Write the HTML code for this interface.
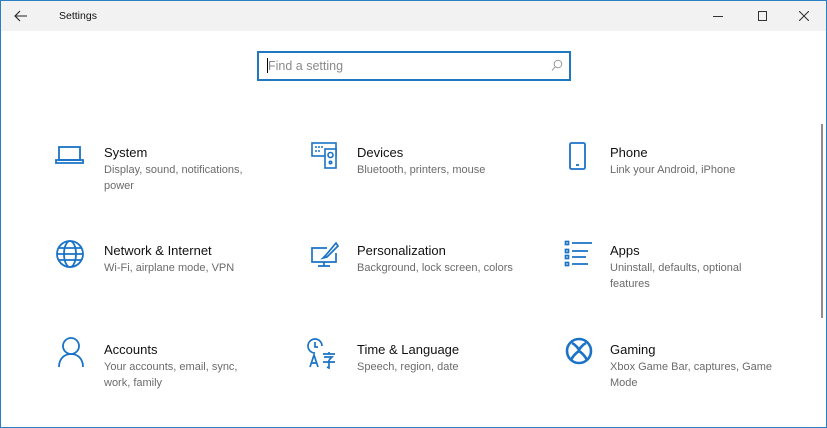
<!DOCTYPE html>
<html><head><style>
*{margin:0;padding:0;box-sizing:border-box}
body{width:827px;height:428px;overflow:hidden;background:#fff;font-family:"Liberation Sans",sans-serif;position:relative}
.frame{position:absolute;left:0;top:0;width:827px;height:428px;border:1px solid #2b7ec1;border-top:1px solid #2b7ec1}
.tb{position:absolute;left:1px;top:1px;width:825px;height:30px;background:#f2f2f2}
.t{position:absolute;font-size:13px;color:#111;white-space:nowrap}
.s{position:absolute;font-size:11px;color:#6b6b6b;line-height:16px}
svg{position:absolute}
</style></head><body>
<div class="tb"></div>
<div class="frame"></div>
<svg style="left:14px;top:10px" width="14" height="12" viewBox="0 0 14 12"><path d="M13 6H1M6 1L1 6l5 5" stroke="#222" stroke-width="1.1" fill="none"/></svg>
<div class="t" style="left:59px;top:10px;font-size:10.5px">Settings</div>
<div style="position:absolute;left:713px;top:16px;width:10px;height:1px;background:#333"></div>
<div style="position:absolute;left:758px;top:11px;width:9px;height:10px;border:1px solid #333"></div>
<svg style="left:799px;top:11px" width="10" height="10"><path d="M0 0L10 10M10 0L0 10" stroke="#333" stroke-width="1.1"/></svg>
<div style="position:absolute;left:257px;top:51px;width:314px;height:30px;border:2px solid #1f78c0;background:#fff"></div>
<div style="position:absolute;left:267px;top:58px;width:1px;height:15px;background:#000"></div>
<div class="t" style="left:268px;top:59px;font-size:12.5px;color:#8a8a8a">Find a setting</div>
<svg style="left:551px;top:59px" width="12" height="13" viewBox="0 0 12 13"><circle cx="7" cy="5" r="3.8" stroke="#999" fill="none"/><path d="M4.3 7.7L1 11.5" stroke="#999"/></svg>
<div style="position:absolute;left:821px;top:124px;width:2px;height:194px;background:#8d8d8d"></div>

<svg style="left:55px;top:144px" width="30" height="22" viewBox="0 0 30 22" fill="none" stroke="#1a73c6" stroke-width="1.8"><rect x="4" y="3" width="21" height="13"/><path d="M1 16h27v3H1z"/></svg>
<svg style="left:310px;top:141px" width="30" height="30" viewBox="0 0 30 30" fill="none" stroke="#1a73c6" stroke-width="1.6"><rect x="2" y="2" width="24" height="13"/><rect x="15" y="8" width="11" height="19" fill="#fff"/><circle cx="20.5" cy="14" r="2.5"/><circle cx="20.5" cy="21.5" r="1.2"/><path d="M5 6h8M5 10h6" stroke-dasharray="2 1"/></svg>
<svg style="left:568px;top:141px" width="20" height="30" viewBox="0 0 20 30" fill="none" stroke="#1a73c6" stroke-width="1.8"><rect x="2" y="2" width="15" height="26" rx="1.5"/><path d="M8 24h3"/></svg>
<svg style="left:55px;top:239px" width="30" height="30" viewBox="0 0 30 30" fill="none" stroke="#1a73c6" stroke-width="1.8"><circle cx="15" cy="15" r="13"/><ellipse cx="15" cy="15" rx="6" ry="13"/><path d="M2 15h26M4 9h22M4 21h22"/></svg>
<svg style="left:310px;top:241px" width="30" height="28" viewBox="0 0 30 28" fill="none" stroke="#1a73c6" stroke-width="1.7"><path d="M17 7H2v14h24V12"/><path d="M14 21v4M8 25h12"/><path d="M26 2l-10 12-3 3 4-1 11-11z"/></svg>
<svg style="left:564px;top:240px" width="30" height="28" viewBox="0 0 30 28" fill="none" stroke="#1a73c6" stroke-width="1.7"><rect x="1.5" y="1.5" width="3" height="3"/><rect x="1.5" y="9.5" width="3" height="3"/><rect x="1.5" y="15.5" width="3" height="3"/><rect x="1.5" y="22.5" width="3" height="3"/><path d="M8 3h20M8 11h16M8 17h14M8 24h16"/></svg>
<svg style="left:57px;top:336px" width="28" height="32" viewBox="0 0 28 32" fill="none" stroke="#1a73c6" stroke-width="1.8"><circle cx="14" cy="10" r="8"/><path d="M2 31c0-8 5-13 12-13s12 5 12 13"/></svg>
<svg style="left:307px;top:337px" width="34" height="32" viewBox="0 0 34 32" fill="none" stroke="#1a73c6" stroke-width="1.7"><path d="M15 9a7 7 0 1 0-7 7"/><path d="M8 5v5h3"/><path d="M3 30l4-12 4 12M4.5 26h5"/><path d="M16 17h12M22 15v2M17 20h8l-3 3M16 25h12M22 23v8l-2-1"/></svg>
<svg style="left:565px;top:337px" width="28" height="28" viewBox="0 0 28 28" fill="none" stroke="#1a73c6" stroke-width="2.6"><circle cx="14" cy="14" r="12"/><path d="M7 6c4 2 7 6 7 8M21 6c-4 2-7 6-7 8M6 23c2-4 5-7 8-9 3 2 6 5 8 9"/></svg>

<div class="t" style="left:104px;top:145px">System</div>
<div class="s" style="left:104px;top:162px">Display, sound, notifications,<br>power</div>
<div class="t" style="left:357px;top:145px">Devices</div>
<div class="s" style="left:357px;top:162px">Bluetooth, printers, mouse</div>
<div class="t" style="left:610px;top:145px">Phone</div>
<div class="s" style="left:610px;top:162px">Link your Android, iPhone</div>

<div class="t" style="left:104px;top:243px">Network &amp; Internet</div>
<div class="s" style="left:104px;top:260px">Wi-Fi, airplane mode, VPN</div>
<div class="t" style="left:357px;top:243px">Personalization</div>
<div class="s" style="left:357px;top:260px">Background, lock screen, colors</div>
<div class="t" style="left:610px;top:243px">Apps</div>
<div class="s" style="left:610px;top:260px">Uninstall, defaults, optional<br>features</div>

<div class="t" style="left:104px;top:342px">Accounts</div>
<div class="s" style="left:104px;top:359px">Your accounts, email, sync,<br>work, family</div>
<div class="t" style="left:357px;top:342px">Time &amp; Language</div>
<div class="s" style="left:357px;top:359px">Speech, region, date</div>
<div class="t" style="left:610px;top:342px">Gaming</div>
<div class="s" style="left:610px;top:359px">Xbox Game Bar, captures, Game<br>Mode</div>
</body></html>
